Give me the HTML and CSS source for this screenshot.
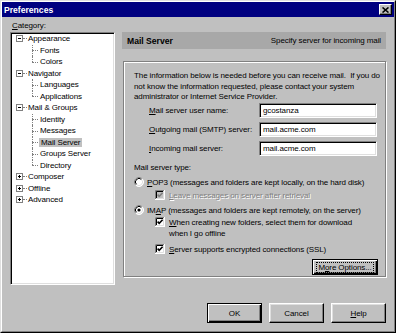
FILE: index.html
```html
<!DOCTYPE html>
<html>
<head>
<meta charset="utf-8">
<title>Preferences</title>
<link rel="stylesheet" href="styles.css">
</head>
<body>
<svg class="defs" width="0" height="0" aria-hidden="true">
  <defs>
    <symbol id="chk" viewBox="0 0 10 10">
      <rect x="0" y="0" width="10" height="10" fill="#fff"/>
      <path d="M0.5 10V0.5H10" stroke="#808080" fill="none"/>
      <path d="M1.5 9V1.5H9" stroke="#000" fill="none"/>
      <path d="M0 9.5H9.5V0" stroke="#fff" fill="none"/>
      <path d="M1 8.5H8.5V1" stroke="#dfdfdf" fill="none"/>
      <polyline points="2.6,4.6 4.2,6.3 7.6,2.8" stroke="#000" stroke-width="1.6" fill="none"/>
    </symbol>
    <symbol id="chkoff" viewBox="0 0 10 10">
      <rect x="0" y="0" width="10" height="10" fill="#c0c0c0"/>
      <path d="M0.5 10V0.5H10" stroke="#808080" fill="none"/>
      <path d="M1.5 9V1.5H9" stroke="#000" fill="none"/>
      <path d="M0 9.5H9.5V0" stroke="#fff" fill="none"/>
      <path d="M1 8.5H8.5V1" stroke="#dfdfdf" fill="none"/>
      <polyline points="2.6,4.6 4.2,6.3 7.6,2.8" stroke="#808080" stroke-width="1.6" fill="none"/>
    </symbol>
    <symbol id="rad" viewBox="0 0 10 10">
      <circle cx="5" cy="5" r="4.5" fill="#fff"/>
      <path d="M1.8 8.2A4.5 4.5 0 0 1 8.2 1.8" stroke="#808080" fill="none"/>
      <path d="M2.5 7.5A3.5 3.5 0 0 1 7.5 2.5" stroke="#000" fill="none"/>
      <path d="M8.2 1.8A4.5 4.5 0 0 1 1.8 8.2" stroke="#fff" fill="none"/>
      <path d="M7.5 2.5A3.5 3.5 0 0 1 2.5 7.5" stroke="#dfdfdf" fill="none"/>
    </symbol>
  </defs>
</svg>
<div class="window">
  <div class="frame">
    <div class="titlebar">
      <span class="title">Preferences</span>
      <span class="close"><svg width="7" height="6" viewBox="0 0 7 6"><path d="M0.5 0.5L6.5 5.5M6.5 0.5L0.5 5.5" stroke="#000" stroke-width="1.6"/></svg></span>
    </div>
    <div class="content">
      <div class="label"><u>C</u>ategory:</div>
      <div class="tree">
        <div class="row"><span class="exp"></span><span class="stub"></span><span class="txt">Appearance</span></div>
        <div class="kids">
          <div class="row leaf"><span class="txt">Fonts</span></div>
          <div class="row leaf"><span class="txt">Colors</span></div>
        </div>
        <div class="row"><span class="exp"></span><span class="stub"></span><span class="txt">Navigator</span></div>
        <div class="kids">
          <div class="row leaf"><span class="txt">Languages</span></div>
          <div class="row leaf"><span class="txt">Applications</span></div>
        </div>
        <div class="row"><span class="exp"></span><span class="stub"></span><span class="txt">Mail &amp; Groups</span></div>
        <div class="kids">
          <div class="row leaf"><span class="txt">Identity</span></div>
          <div class="row leaf"><span class="txt">Messages</span></div>
          <div class="row leaf"><span class="txt sel">Mail Server</span></div>
          <div class="row leaf"><span class="txt">Groups Server</span></div>
          <div class="row leaf"><span class="txt">Directory</span></div>
        </div>
        <div class="row"><span class="exp plus"></span><span class="stub"></span><span class="txt">Composer</span></div>
        <div class="row"><span class="exp plus"></span><span class="stub"></span><span class="txt">Offline</span></div>
        <div class="row"><span class="exp plus"></span><span class="stub"></span><span class="txt">Advanced</span></div>
      </div>
      <div class="right">
        <div class="header">
          <span class="hdr-title">Mail Server</span>
          <span class="hdr-desc">Specify server for incoming mail</span>
        </div>
        <div class="group">
          <div class="para">The information below is needed before you can receive mail.&nbsp; If you do<br>not know the information requested, please contact your system<br>administrator or Internet Service Provider.</div>
          <div class="fields">
            <div class="flabel"><u>M</u>ail server user name:</div>
            <div class="input">gcostanza</div>
            <div class="flabel"><u>O</u>utgoing mail (SMTP) server:</div>
            <div class="input">mail.acme.com</div>
            <div class="flabel"><u>I</u>ncoming mail server:</div>
            <div class="input">mail.acme.com</div>
          </div>
          <div class="section">Mail server type:</div>
          <div class="opt pop3"><svg class="radio" width="10" height="10"><use href="#rad"/></svg><span><u>P</u>OP3 (messages and folders are kept locally, on the hard disk)</span></div>
          <div class="opt sub leave"><svg class="check" width="10" height="10"><use href="#chkoff"/></svg><span class="disabled"><u>L</u>eave messages on server after retrieval</span></div>
          <div class="opt imap"><svg class="radio" width="10" height="10"><use href="#rad"/><circle cx="5" cy="5" r="1.6" fill="#000"/></svg><span>IM<u>A</u>P (messages and folders are kept remotely, on the server)</span></div>
          <div class="opt sub when"><svg class="check" width="10" height="10"><use href="#chk"/></svg><span><u>W</u>hen creating new folders, select them for download<br>when I go offline</span></div>
          <div class="opt sub ssl"><svg class="check" width="10" height="10"><use href="#chk"/></svg><span><u>S</u>erver supports encrypted connections (SSL)</span></div>
          <div class="btnrow"><div class="btn more"><span class="focus">M<u>o</u>re Options...</span></div></div>
        </div>
      </div>
    </div>
    <div class="footer">
      <div class="btn default">OK</div>
      <div class="btn">Cancel</div>
      <div class="btn"><span><u>H</u>elp</span></div>
    </div>
  </div>
</div>
</body>
</html>
```
FILE: styles.css
```css
* { box-sizing: border-box; }
html, body { margin: 0; padding: 0; }
body {
  background: #c0c0c0;
  font-family: "Liberation Sans", Arial, sans-serif;
  font-size: 8px;
  letter-spacing: -0.1px;
  color: #000;
}
.defs { position: absolute; width: 0; height: 0; overflow: hidden; }
u { text-decoration: underline; text-underline-offset: 1px; }

.window {
  width: 396px;
  height: 333px;
  border: 1px solid;
  border-color: #dfdfdf #000 #000 #dfdfdf;
  background: #c0c0c0;
}
.frame {
  height: 100%;
  border: 1px solid;
  border-color: #fff #808080 #808080 #fff;
  display: flex;
  flex-direction: column;
}
.titlebar {
  height: 15px;
  background: #000080;
  color: #fff;
  display: flex;
  align-items: center;
  justify-content: space-between;
  padding: 0 2px 0 2px;
}
.title { font-weight: bold; font-size: 8.6px; letter-spacing: 0; }
.close {
  width: 13px;
  height: 11px;
  background: #c0c0c0;
  border: 1px solid;
  border-color: #fff #000 #000 #fff;
  box-shadow: inset -1px -1px #808080;
  display: flex;
  align-items: center;
  justify-content: center;
}
.close svg { display: block; }

.content {
  display: grid;
  grid-template-columns: 105px 264px;
  column-gap: 7px;
  padding: 3px 0 0 8px;
}
.label { grid-column: 1; grid-row: 1; line-height: 11px; height: 11px; margin: 0 0 1px 2px; }

.tree {
  grid-column: 1;
  grid-row: 2;
  height: 253px;
  background: #fff;
  border: 1px solid;
  border-color: #808080 #fff #fff #808080;
  box-shadow: inset 1px 1px #000, inset -1px -1px #dfdfdf;
  padding: 0 0 0 5px;
}
.row {
  height: 11.5px;
  display: flex;
  align-items: center;
  white-space: nowrap;
}
.exp {
  position: relative;
  width: 7px;
  height: 7px;
  border: 1px solid #808080;
  background: #fff;
  flex: none;
}
.exp::before {
  content: "";
  position: absolute;
  left: 1px;
  top: 2px;
  width: 3px;
  height: 1px;
  background: #000;
}
.exp.plus::after {
  content: "";
  position: absolute;
  left: 2px;
  top: 1px;
  width: 1px;
  height: 3px;
  background: #000;
}
.stub { width: 4px; border-top: 1px dotted #808080; flex: none; }
.txt { line-height: 9px; padding: 0 1px; }
.sel { background: #c0c0c0; padding: 0 2px; }
.kids { margin-left: 16px; }
.leaf { position: relative; padding-left: 7px; }
.leaf::before {
  content: "";
  position: absolute;
  left: 0;
  top: 50%;
  width: 6px;
  border-top: 1px dotted #808080;
}
.leaf::after {
  content: "";
  position: absolute;
  left: 0;
  top: 0;
  bottom: 0;
  border-left: 1px dotted #808080;
}
.leaf:last-child::after { bottom: 50%; }

.right { grid-column: 2; grid-row: 2; }
.header {
  height: 17px;
  background: #a8a8a8;
  display: flex;
  align-items: center;
  justify-content: space-between;
  padding: 0 5px;
}
.hdr-title { font-weight: bold; font-size: 8.6px; letter-spacing: 0; }

.group {
  margin: 12px 0 0 1px;
  height: 216px;
  border: 1px solid #808080;
  box-shadow: inset 1px 1px #fff, 1px 1px #fff;
  padding: 9px 7px 0 10px;
}
.para { line-height: 10.5px; white-space: nowrap; }
.fields {
  margin-top: 0.5px;
  display: grid;
  grid-template-columns: 110px 118px;
  row-gap: 4px;
  padding-left: 15px;
}
.flabel { line-height: 15px; white-space: nowrap; }
.input {
  height: 15px;
  background: #fff;
  border: 1px solid;
  border-color: #808080 #fff #fff #808080;
  box-shadow: inset 1px 1px #000, inset -1px -1px #dfdfdf;
  padding: 0 3px;
  line-height: 13px;
}
.section { margin-top: 5.5px; line-height: 11px; }
.opt { display: flex; align-items: flex-start; line-height: 11px; white-space: nowrap; }
.opt svg { flex: none; margin-top: 0.5px; display: block; }
.radio { margin-right: 3px; }
.check { margin-right: 4px; }
.sub { margin-left: 21px; }
.pop3 { margin-top: 4px; }
.leave { margin-top: 2px; }
.imap { margin-top: 4px; }
.when { margin-top: 1px; }
.ssl { margin-top: 5px; }
.disabled { color: #808080; text-shadow: 1px 1px 0 #fff; }

.btnrow { display: flex; justify-content: flex-end; margin-top: 4.5px; }
.btn {
  width: 55px;
  height: 20px;
  border: 1px solid;
  border-color: #fff #000 #000 #fff;
  box-shadow: inset -1px -1px #808080, inset 1px 1px #dfdfdf;
  display: flex;
  align-items: center;
  justify-content: center;
  background: #c0c0c0;
}
.btn.default, .btn.more {
  border-color: #000;
  box-shadow: inset 1px 1px #fff, inset -1px -1px #000, inset -2px -2px #808080;
}
.btn.more { width: 66px; height: 16px; white-space: nowrap; }
.focus { outline: 1px dotted #000; outline-offset: 0; padding: 0 1px; line-height: 9px; }

.footer {
  display: flex;
  justify-content: flex-end;
  gap: 7px;
  padding-right: 8px;
  margin-top: 18px;
}
```
